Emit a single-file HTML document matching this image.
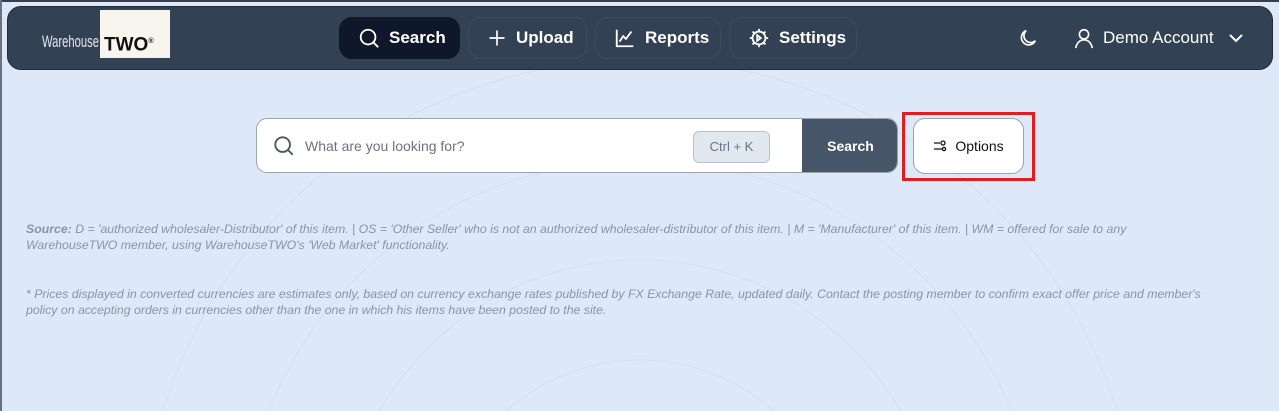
<!DOCTYPE html>
<html><head><style>
*{box-sizing:border-box;margin:0;padding:0}
html,body{width:1279px;height:411px;overflow:hidden}
body{background:#dde9f9;font-family:"Liberation Sans",sans-serif;position:relative}
.nav{position:absolute;left:7px;top:6px;width:1266px;height:64px;background:#334155;border-radius:14px;border:1px solid #1e293b}
.w{position:absolute;left:34px;top:25px;color:#e5e7eb;font-size:17px;transform:scaleX(.66);transform-origin:left;white-space:nowrap}
.b{position:absolute;left:92px;top:3px;background:#f8f4ee;height:48px;width:70px;font-weight:bold;font-size:19px;color:#111;padding:22px 0 0 4px;line-height:20px}
.btn{position:absolute;top:10px;height:42px;border-radius:13px;border:1px solid #3f4c60;color:#fff;font-weight:bold;font-size:17px;display:flex;align-items:center;padding-left:18px;gap:9px}
.btn svg{stroke:#fff;fill:none;stroke-width:2}
.sb{position:absolute;left:256px;top:118px;width:642px;height:55px;background:#fff;border:1px solid #9ca3af;border-radius:11px;overflow:hidden}
.note{position:absolute;left:26px;font-size:12.3px;font-style:italic;color:#8a94a3;line-height:16px;width:1180px}
</style></head><body>
<svg width="1279" height="411" style="position:absolute;left:0;top:0" fill="none" stroke="#d3e0f1" stroke-width="1"><circle cx="640" cy="560" r="500"/><circle cx="640" cy="560" r="400"/><circle cx="640" cy="560" r="300"/><circle cx="640" cy="560" r="200"/></svg>
<div style="position:absolute;left:0;top:0;width:1279px;height:2px;background:#3a3f47"></div>
<div style="position:absolute;left:0;top:0;width:2px;height:411px;background:#6b7280"></div>
<div class="nav">
<span class="w">Warehouse</span><span class="b">TWO<sup style="font-size:7px">®</sup></span>
<div class="btn" style="left:331px;width:121px;background:#0f172a;border-color:#0f172a"><svg width="22" height="22" viewBox="0 0 24 24"><circle cx="11" cy="11" r="8"/><path d="M17 17l5 5"/></svg>Search</div>
<div class="btn" style="left:460px;width:119px"><svg width="20" height="20" viewBox="0 0 24 24"><path d="M12 3v18M3 12h18"/></svg>Upload</div>
<div class="btn" style="left:587px;width:126px"><svg width="22" height="22" viewBox="0 0 24 24"><path d="M3 3v18h18M6 16l4-6 3 3 6-8"/></svg>Reports</div>
<div class="btn" style="left:721px;width:128px"><svg width="22" height="22" viewBox="0 0 24 24"><circle cx="12" cy="12" r="7"/><path d="M12 2v3M12 19v3M2 12h3M19 12h3M5 5l2 2M17 17l2 2M5 19l2-2M17 7l2-2M10 9l4 3-4 3z"/></svg>Settings</div>
<svg style="position:absolute;left:1009px;top:20px" width="22" height="22" viewBox="0 0 24 24" fill="none" stroke="#fff" stroke-width="1.8"><path d="M20 15A8 8 0 1 1 10 4a7 7 0 0 0 10 11z"/></svg>
<svg style="position:absolute;left:1065px;top:19px" width="22" height="24" viewBox="0 0 24 24" fill="none" stroke="#fff" stroke-width="1.8"><circle cx="12" cy="8" r="5"/><path d="M3 23c1-6 5-9 9-9s8 3 9 9"/></svg>
<div style="position:absolute;left:1095px;top:21px;color:#fff;font-size:17px">Demo Account</div>
<svg style="position:absolute;left:1220px;top:24px" width="16" height="14" viewBox="0 0 16 14" fill="none" stroke="#fff" stroke-width="2"><path d="M2 4l6 6 6-6"/></svg>
</div>
<div class="sb">
<svg style="position:absolute;left:16px;top:16px" width="22" height="22" viewBox="0 0 24 24" fill="none" stroke="#4b5563" stroke-width="2"><circle cx="10.5" cy="10.5" r="8"/><path d="M16.5 16.5l5 5"/></svg>
<div style="position:absolute;left:48px;top:19px;font-size:14px;color:#6b7280">What are you looking for?</div>
<div style="position:absolute;left:436px;top:12px;width:77px;height:32px;background:#e2e8f0;border:1px solid #b6c0cc;border-radius:6px;font-size:13px;color:#64748b;text-align:center;line-height:30px">Ctrl + K</div>
<div style="position:absolute;left:545px;top:0;width:97px;height:55px;background:#475569;color:#fff;font-weight:bold;font-size:14px;text-align:center;line-height:55px">Search</div>
</div>
<div style="position:absolute;left:902px;top:112px;width:133px;height:69px;border:3px solid #e11d1d"></div>
<div style="position:absolute;left:913px;top:118px;width:111px;height:56px;background:#fff;border:1px solid #9ca3af;border-radius:12px;display:flex;align-items:center;justify-content:center;gap:8px;font-size:14px;color:#111">
<svg width="14" height="14" viewBox="0 0 14 14" fill="none" stroke="#111" stroke-width="1.3"><path d="M1 4h6M1 10h8M13 10h-1"/><circle cx="10" cy="4" r="2"/><circle cx="11" cy="10" r="1.6"/></svg>Options</div>
<div class="note" style="top:221px"><b style="font-weight:bold">Source:</b> D = 'authorized wholesaler-Distributor' of this item. | OS = 'Other Seller' who is not an authorized wholesaler-distributor of this item. | M = 'Manufacturer' of this item. | WM = offered for sale to any WarehouseTWO member, using WarehouseTWO's 'Web Market' functionality.</div>
<div class="note" style="top:286px">* Prices displayed in converted currencies are estimates only, based on currency exchange rates published by FX Exchange Rate, updated daily. Contact the posting member to confirm exact offer price and member's policy on accepting orders in currencies other than the one in which his items have been posted to the site.</div>
</body></html>
